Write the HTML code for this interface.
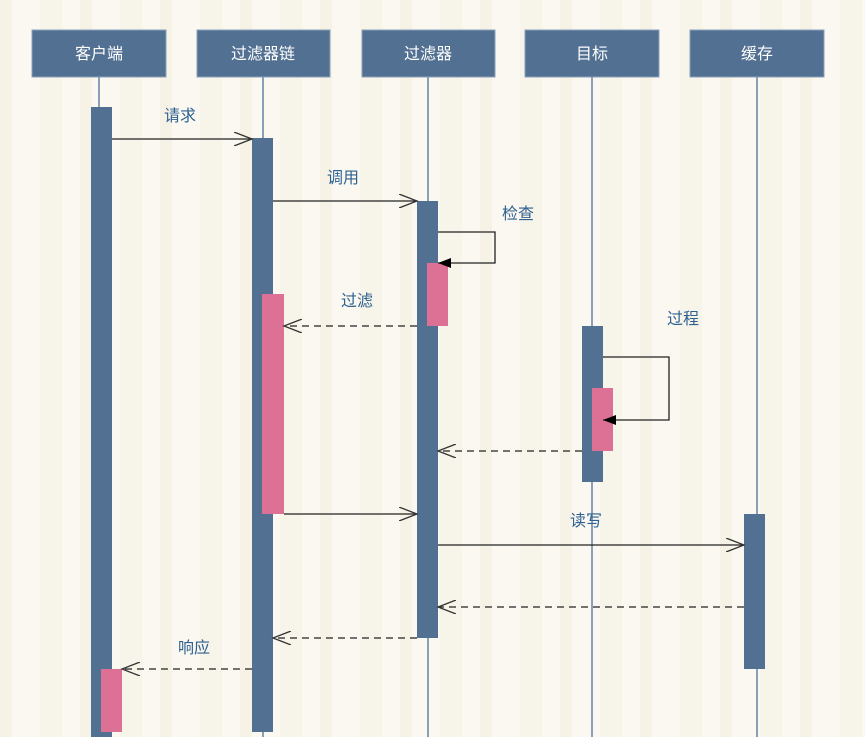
<!DOCTYPE html>
<html><head><meta charset="utf-8"><style>
body{margin:0;width:865px;height:737px;overflow:hidden;background:repeating-linear-gradient(90deg,#f6f2e6 0 12px,#faf8f1 12px 40px,#f7f4e9 40px 62px,#faf8f1 62px 80px);font-family:"Liberation Sans","Noto Sans CJK SC",sans-serif}
</style></head><body>
<svg width="865" height="737" viewBox="0 0 865 737" xmlns="http://www.w3.org/2000/svg" style="position:absolute;left:0;top:0">
<defs>
<marker id="open" markerWidth="20" markerHeight="14" refX="18" refY="7" orient="auto" markerUnits="userSpaceOnUse"><path d="M0,0 L18,7 L0,14" fill="none" stroke="#333" stroke-width="1.3"/></marker>
<marker id="fill" markerWidth="14" markerHeight="10" refX="13" refY="5" orient="auto" markerUnits="userSpaceOnUse"><path d="M0,0 L13,5 L0,10z" fill="#000"/></marker>
</defs>
<g stroke="#8aa0b8" stroke-width="2">
<line x1="99" y1="77" x2="99" y2="737"/><line x1="263" y1="77" x2="263" y2="737"/><line x1="428" y1="77" x2="428" y2="737"/><line x1="592" y1="77" x2="592" y2="737"/><line x1="757" y1="77" x2="757" y2="737"/>
</g>
<g fill="#527092" stroke="#8aa0b8" stroke-width="1">
<rect x="32" y="30" width="134" height="47"/><rect x="197" y="30" width="133" height="47"/><rect x="362" y="30" width="133" height="47"/><rect x="525" y="30" width="134" height="47"/><rect x="690" y="30" width="134" height="47"/>
</g>
<g fill="#fff" font-size="16" text-anchor="middle" font-family="Liberation Sans,Noto Sans CJK SC,sans-serif">
<text x="99" y="59">客户端</text><text x="263" y="59">过滤器链</text><text x="428" y="59">过滤器</text><text x="592" y="59">目标</text><text x="757" y="59">缓存</text>
</g>
<g fill="#527092">
<rect x="91" y="107" width="21" height="630"/><rect x="252" y="138" width="21" height="594"/><rect x="417" y="201" width="21" height="437"/><rect x="582" y="326" width="21" height="156"/><rect x="744" y="514" width="21" height="155"/>
</g>
<g fill="#dd7095">
<rect x="101" y="669" width="21" height="63"/><rect x="262" y="294" width="22" height="220"/><rect x="427" y="263" width="21" height="63"/><rect x="592" y="388" width="21" height="63"/>
</g>
<g stroke="#222" stroke-width="1.3" fill="none">
<line x1="112" y1="139" x2="252" y2="139" marker-end="url(#open)"/>
<line x1="273" y1="201" x2="417" y2="201" marker-end="url(#open)"/>
<polyline points="438,232 495,232 495,263 438,263" marker-end="url(#fill)"/>
<polyline points="603,357 669,357 669,420 603,420" marker-end="url(#fill)"/>
<line x1="284" y1="514" x2="417" y2="514" marker-end="url(#open)"/>
<line x1="438" y1="545" x2="744" y2="545" marker-end="url(#open)"/>
<g stroke-dasharray="7,5">
<line x1="417" y1="326" x2="284" y2="326" marker-end="url(#open)"/>
<line x1="582" y1="451" x2="438" y2="451" marker-end="url(#open)"/>
<line x1="744" y1="607" x2="438" y2="607" marker-end="url(#open)"/>
<line x1="417" y1="638" x2="273" y2="638" marker-end="url(#open)"/>
<line x1="252" y1="669" x2="122" y2="669" marker-end="url(#open)"/>
</g>
</g>
<g fill="#2e6190" font-size="16" text-anchor="middle" font-family="Liberation Sans,Noto Sans CJK SC,sans-serif">
<text x="180" y="121">请求</text><text x="343" y="183">调用</text><text x="518" y="219">检查</text><text x="357" y="306">过滤</text><text x="683" y="324">过程</text><text x="586" y="526">读写</text><text x="194" y="653">响应</text>
</g>
</svg>
</body></html>
